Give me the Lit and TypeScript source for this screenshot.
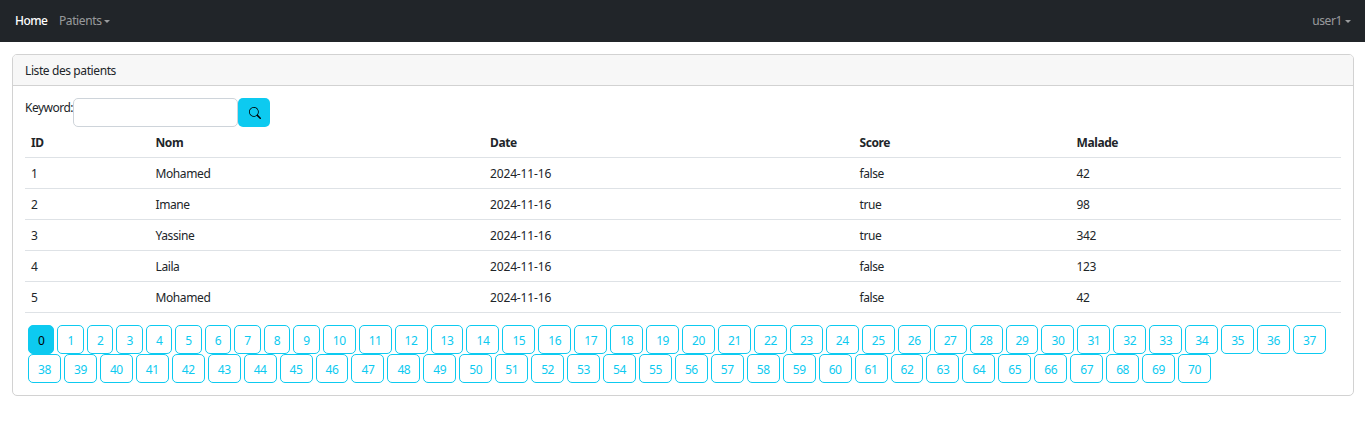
import { LitElement, html, css } from "lit";
import { customElement, state } from "lit/decorators.js";
import { classMap } from "lit/directives/class-map.js";

interface Patient {
  id: number;
  nom: string;
  date: string;
  score: boolean;
  malade: number;
}

const PATIENTS: Patient[] = [
  { id: 1, nom: "Mohamed", date: "2024-11-16", score: false, malade: 42 },
  { id: 2, nom: "Imane", date: "2024-11-16", score: true, malade: 98 },
  { id: 3, nom: "Yassine", date: "2024-11-16", score: true, malade: 342 },
  { id: 4, nom: "Laila", date: "2024-11-16", score: false, malade: 123 },
  { id: 5, nom: "Mohamed", date: "2024-11-16", score: false, malade: 42 },
];

@customElement("app-navbar")
export class AppNavbar extends LitElement {
  static styles = css`
    :host {
      display: block;
    }
    nav {
      display: flex;
      align-items: center;
      box-sizing: border-box;
      height: 42px;
      padding: 0 14px 0 15px;
      background: #212529;
    }
    a {
      display: flex;
      align-items: center;
      height: 30px;
      color: rgba(255, 255, 255, 0.55);
      text-decoration: none;
      cursor: pointer;
    }
    .home {
      width: 44px;
      color: #fff;
      font-weight: 500;
      letter-spacing: -0.55px;
    }
    .user {
      margin-left: auto;
    }
    .caret::after {
      content: "";
      margin-left: 3px;
      border-top: 3px solid;
      border-left: 3px solid transparent;
      border-right: 3px solid transparent;
    }
  `;

  render() {
    return html`
      <nav>
        <a class="home">Home</a>
        <a class="caret">Patients</a>
        <a class="user caret">user1</a>
      </nav>
    `;
  }
}

@customElement("app-pagination")
export class AppPagination extends LitElement {
  @state() private current = 0;

  static styles = css`
    :host {
      display: block;
    }
    ul {
      display: flex;
      flex-wrap: wrap;
      margin: 0;
      padding: 0;
      list-style: none;
    }
    li {
      box-sizing: border-box;
      width: 32.94px;
      height: 29px;
      margin-left: 3px;
      padding-top: 2px;
      border: 1px solid #0dcaf0;
      border-radius: 5px;
      color: #0dcaf0;
      line-height: 26px;
      text-align: center;
      cursor: pointer;
    }
    .single {
      width: 26.47px;
    }
    .active {
      background: #0dcaf0;
      color: #000;
    }
  `;

  render() {
    return html`
      <ul>
        ${Array.from(
          { length: 71 },
          (_, i) => html`<li
            class=${classMap({ single: i < 10, active: i === this.current })}
            @click=${() => (this.current = i)}
          >${i}</li>`
        )}
      </ul>
    `;
  }
}

@customElement("app-root")
export class AppRoot extends LitElement {
  static styles = css`
    :host {
      display: block;
      min-height: 438px;
      background: #fff;
      color: #212529;
      font-family: "Noto Sans", "Open Sans", sans-serif;
      font-size: 12px;
      letter-spacing: -0.4px;
      line-height: 18px;
    }
    .card {
      margin: 12px 11px 0 12px;
      border: 1px solid #d2d2d2;
      border-radius: 5px;
    }
    .header {
      box-sizing: border-box;
      height: 31px;
      padding: 7px 12px 5px;
      border-bottom: 1px solid #d2d2d2;
      border-radius: 4px 4px 0 0;
      background: #f7f7f7;
    }
    .body {
      padding: 12px;
    }
    form {
      display: flex;
      height: 29px;
    }
    label {
      width: 48px;
      padding-top: 1px;
      white-space: nowrap;
      letter-spacing: -0.5px;
    }
    .text {
      box-sizing: border-box;
      width: 165px;
      height: 29px;
      margin: 0;
      padding: 4px 9px;
      border: 1px solid #ced4da;
      border-radius: 5px;
      background: #fff;
      font: inherit;
      outline: none;
    }
    .search {
      display: flex;
      align-items: center;
      justify-content: center;
      width: 32px;
      height: 29px;
      padding: 1px 0 0 1px;
      border: 0;
      border-radius: 5px;
      background: #0dcaf0;
      color: #000;
    }
    table {
      width: 100%;
      margin-bottom: 12px;
      border-collapse: separate;
      border-spacing: 0;
      table-layout: fixed;
    }
    th,
    td {
      box-sizing: border-box;
      height: 31px;
      padding: 7px 6px 5px;
      border-bottom: 1px solid #dee2e6;
      text-align: left;
      vertical-align: top;
    }
    th {
      font-weight: 700;
    }
    .date {
      letter-spacing: -0.15px;
    }
    .c-id { width: 124.5px; }
    .c-nom { width: 334.5px; }
    .c-date { width: 369.5px; }
    .c-score { width: 217px; }
  `;

  render() {
    return html`
      <app-navbar></app-navbar>
      <section class="card">
        <div class="header">Liste des patients</div>
        <div class="body">
          <form @submit=${(e: Event) => e.preventDefault()}>
            <label for="keyword">Keyword:</label>
            <input id="keyword" class="text" type="text" />
            <button class="search" aria-label="Search">
              <svg width="12" height="12" viewBox="0 0 16 16" fill="currentColor">
                <path
                  d="M11.742 10.344a6.5 6.5 0 1 0-1.397 1.398h-.001c.03.04.062.078.098.115l3.85 3.85a1 1 0 0 0 1.415-1.414l-3.85-3.85a1.007 1.007 0 0 0-.115-.1zM12 6.5a5.5 5.5 0 1 1-11 0 5.5 5.5 0 0 1 11 0z"
                />
              </svg>
            </button>
          </form>
          <table>
            <thead>
              <tr>
                <th class="c-id">ID</th>
                <th class="c-nom">Nom</th>
                <th class="c-date">Date</th>
                <th class="c-score">Score</th>
                <th>Malade</th>
              </tr>
            </thead>
            <tbody>
              ${PATIENTS.map(
                (p) => html`<tr>
                  <td>${p.id}</td>
                  <td>${p.nom}</td>
                  <td class="date">${p.date}</td>
                  <td>${p.score}</td>
                  <td>${p.malade}</td>
                </tr>`
              )}
            </tbody>
          </table>
          <app-pagination></app-pagination>
        </div>
      </section>
    `;
  }
}
